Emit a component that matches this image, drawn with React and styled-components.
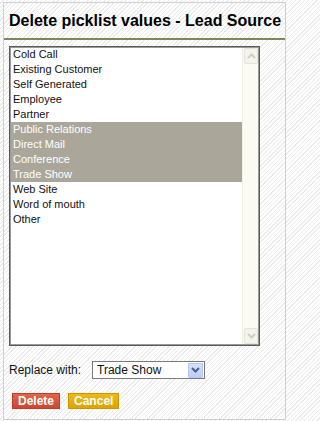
import React from "react";
import styled, { createGlobalStyle } from "styled-components";

const values = [
  { label: "Cold Call" },
  { label: "Existing Customer" },
  { label: "Self Generated" },
  { label: "Employee" },
  { label: "Partner" },
  { label: "Public Relations", selected: true },
  { label: "Direct Mail", selected: true },
  { label: "Conference", selected: true },
  { label: "Trade Show", selected: true },
  { label: "Web Site" },
  { label: "Word of mouth" },
  { label: "Other" },
];

const stripes = `repeating-linear-gradient(
  135deg,
  #ffffff 0px,
  #ffffff 2px,
  #ececec 2px,
  #ececec 3px
)`;

const GlobalStyle = createGlobalStyle`
  html,
  body {
    margin: 0;
    padding: 0;
  }

  body {
    width: 287px;
    height: 421px;
    overflow: hidden;
    background: ${stripes};
    font-family: "Liberation Sans", Arial, sans-serif;
  }

  * {
    box-sizing: border-box;
  }
`;

const Chevron = ({ up, color }) => (
  <svg width="9" height="6" viewBox="0 0 9 6">
    <polyline
      points={up ? "1,5 4.5,1.5 8,5" : "1,1 4.5,4.5 8,1"}
      fill="none"
      stroke={color}
      strokeWidth="2"
    />
  </svg>
);

const App = () => {
  return (
    <>
      <GlobalStyle />
      <Dialog>
        <Title>Delete picklist values - Lead Source</Title>
        <Body>
          <ListBox role="listbox" aria-multiselectable="true">
            <Items>
              {values.map(value => (
                <Item
                  key={value.label}
                  role="option"
                  aria-selected={!!value.selected}
                  $selected={value.selected}
                >
                  {value.label}
                </Item>
              ))}
            </Items>
            <ScrollTrack>
              <ScrollButton>
                <Chevron up color="#cfcfc6" />
              </ScrollButton>
              <ScrollButton>
                <Chevron color="#cfcfc6" />
              </ScrollButton>
            </ScrollTrack>
          </ListBox>
          <ReplaceRow>
            <Label>Replace with:</Label>
            <Select>
              <SelectText>Trade Show</SelectText>
              <DropButton>
                <Chevron color="#4d6185" />
              </DropButton>
            </Select>
          </ReplaceRow>
          <ButtonRow>
            <Button $tone="delete">Delete</Button>
            <Button $tone="cancel">Cancel</Button>
          </ButtonRow>
        </Body>
      </Dialog>
    </>
  );
};

const Dialog = styled.div`
  display: flex;
  flex-direction: column;
  width: 283px;
  height: 418px;
  margin: 2px 0 0 3px;
  border: 1px solid #cfcfcf;
  background: ${stripes};
`;

const Title = styled.h1`
  margin: 0;
  padding: 8px 0 8px 5px;
  border-bottom: 2px solid #85855c;
  font-family: "Liberation Sans", Arial, sans-serif;
  font-size: 16px;
  line-height: 19px;
  font-weight: 700;
  color: #000;
  white-space: nowrap;
`;

const Body = styled.div`
  display: flex;
  flex-direction: column;
  padding: 6px 5px 0;
`;

const ListBox = styled.div`
  display: flex;
  width: 251px;
  height: 300px;
  border: 1px solid #5a5a5a;
  box-shadow: inset 0 0 0 1px #9a9a9a;
  padding: 1px 1px 1px 0;
  background: #fff;
`;

const Items = styled.div`
  flex: 1;
  margin-top: -1px;
  padding-left: 1px;
`;

const Item = styled.div`
  height: 15px;
  padding-left: 2px;
  font-family: "Liberation Sans", Arial, sans-serif;
  font-size: 11px;
  line-height: 15px;
  color: ${({ $selected }) => ($selected ? "#ffffff" : "#111111")};
  background: ${({ $selected }) => ($selected ? "#aaa79a" : "transparent")};
  white-space: nowrap;
`;

const ScrollTrack = styled.div`
  display: flex;
  flex-direction: column;
  justify-content: space-between;
  width: 16px;
  padding: 0 1px;
  background: #fbfbf3;
  border-left: 1px solid #f0f0e6;
`;

const ScrollButton = styled.div`
  display: flex;
  align-items: center;
  justify-content: center;
  width: 14px;
  height: 16px;
  border: 1px solid #e3e3da;
  border-radius: 2px;
  background: #f4f4ec;
`;

const ReplaceRow = styled.div`
  display: flex;
  align-items: center;
  gap: 11px;
  margin-top: 15px;
`;

const Label = styled.span`
  font-family: "Liberation Sans", Arial, sans-serif;
  font-size: 12px;
  color: #111;
`;

const Select = styled.div`
  display: flex;
  align-items: center;
  justify-content: space-between;
  width: 113px;
  height: 18px;
  padding: 1px 1px 1px 4px;
  border: 1px solid #7a7a7a;
  background: #fff;
`;

const SelectText = styled.span`
  font-family: "Liberation Sans", Arial, sans-serif;
  font-size: 12px;
  color: #111;
`;

const DropButton = styled.div`
  display: flex;
  align-items: center;
  justify-content: center;
  width: 15px;
  height: 15px;
  border: 1px solid #b5c8f2;
  border-radius: 1px;
  background: linear-gradient(#d5e0fd, #bccdfa);
`;

const ButtonRow = styled.div`
  display: flex;
  gap: 8px;
  margin-top: 14px;
  padding-left: 3px;
`;

const tones = {
  delete: { top: "#e2654c", bottom: "#cf4630", border: "#b9412c" },
  cancel: { top: "#efb818", bottom: "#dca400", border: "#c99700" },
};

const Button = styled.button`
  height: 16px;
  padding: 0 5px;
  border: 1px solid ${({ $tone }) => tones[$tone].border};
  background: linear-gradient(
    ${({ $tone }) => tones[$tone].top},
    ${({ $tone }) => tones[$tone].bottom}
  );
  color: #fff;
  font-family: "Liberation Sans", Arial, sans-serif;
  font-size: 12px;
  font-weight: 700;
  line-height: 14px;
  cursor: pointer;
`;

export default App;
